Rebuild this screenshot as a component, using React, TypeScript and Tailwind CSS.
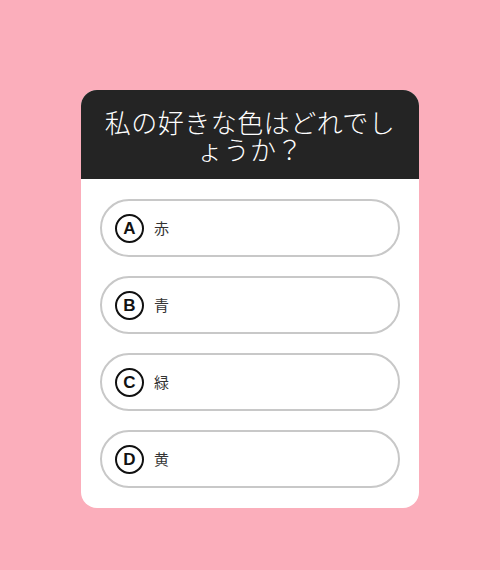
const options = [
  { key: 'A', label: '赤' },
  { key: 'B', label: '青' },
  { key: 'C', label: '緑' },
  { key: 'D', label: '黄' },
];

export default function App() {
  return (
    <div
      className="w-[500px] h-[570px] bg-[#fbaebb] flex justify-center pt-[90px]"
      style={{ fontFamily: '"Noto Sans CJK JP", "Noto Sans", sans-serif' }}
    >
      <div className="w-[338px] h-[418px] bg-white rounded-[16px] overflow-hidden flex flex-col">
        <div className="bg-[#242424] h-[89px] px-5 flex items-center justify-center">
          <h1 className="text-white text-[26px] leading-[27px] text-center font-light tracking-[0.5px]">
            私の好きな色はどれでしょうか？
          </h1>
        </div>
        <div className="flex flex-col gap-[19px] px-[19px] pt-[20px]">
          {options.map((o) => (
            <button
              key={o.key}
              className="h-[58px] w-[300px] rounded-full border-2 border-[#c8c8c8] bg-white flex items-center pl-[13px] gap-[10px]"
            >
              <span
                className="w-[29px] h-[29px] rounded-full border-2 border-[#111] flex items-center justify-center text-[17px] font-semibold text-[#111] leading-none"
                style={{ fontFamily: '"Liberation Sans", sans-serif' }}
              >
                {o.key}
              </span>
              <span className="text-[15px] text-[#333]">{o.label}</span>
            </button>
          ))}
        </div>
      </div>
    </div>
  );
}
